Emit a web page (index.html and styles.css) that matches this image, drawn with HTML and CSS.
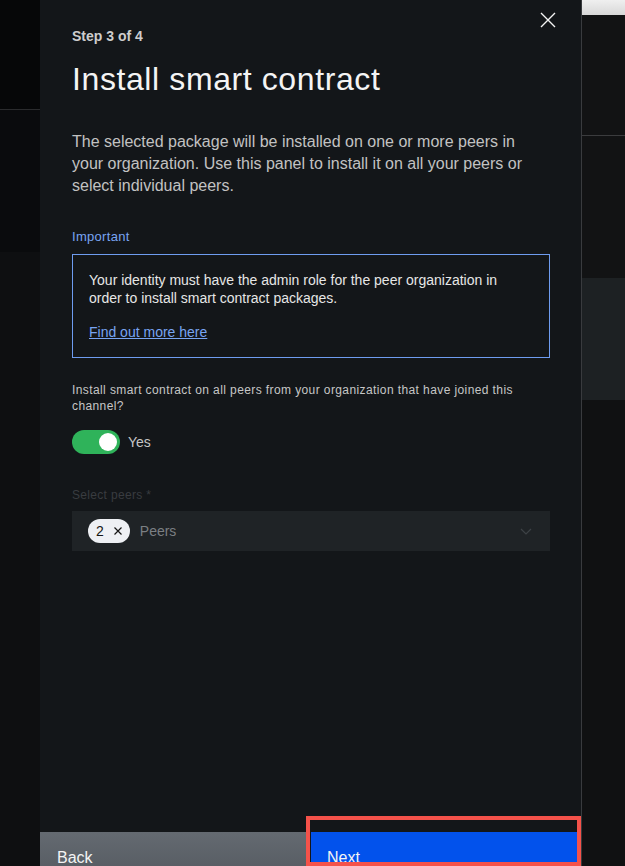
FILE: index.html
```html
<!DOCTYPE html>
<html lang="en">
<head>
<meta charset="utf-8">
<title>Install smart contract</title>
<link rel="stylesheet" href="styles.css">
</head>
<body>
<div class="app">
  <div class="bg-left">
    <div class="bl-top"></div>
    <div class="bl-mid"></div>
    <div class="bl-rest"></div>
  </div>

  <aside class="panel">
    <button class="close" aria-label="Close">
      <svg width="20" height="20" viewBox="0 0 20 20"><path d="M3 3 L17 17 M17 3 L3 17" stroke="#f4f4f4" stroke-width="1.4" fill="none"/></svg>
    </button>
    <div class="content">
      <div class="step">Step 3 of 4</div>
      <h1 class="title">Install smart contract</h1>
      <p class="desc">The selected package will be installed on one or more peers in your organization. Use this panel to install it on all your peers or select individual peers.</p>

      <div class="important-label">Important</div>
      <div class="notice">
        <p class="notice-text">Your identity must have the admin role for the peer organization in order to install smart contract packages.</p>
        <a class="notice-link" href="#">Find out more here</a>
      </div>

      <p class="question">Install smart contract on all peers from your organization that have joined this channel?</p>
      <div class="toggle-row">
        <span class="toggle"><span class="knob"></span></span>
        <span class="toggle-label">Yes</span>
      </div>

      <div class="field-label">Select peers *</div>
      <div class="select">
        <span class="tag">
          <span class="tag-num">2</span>
          <svg class="tag-x" width="16" height="16" viewBox="0 0 16 16"><path d="M4.5 4.5 L11.5 11.5 M11.5 4.5 L4.5 11.5" stroke="#161616" stroke-width="1.2" fill="none"/></svg>
        </span>
        <span class="placeholder">Peers</span>
        <svg class="chev" width="16" height="16" viewBox="0 0 16 16"><path d="M3 6 L8 11 L13 6" stroke="#3d4246" stroke-width="1.2" fill="none"/></svg>
      </div>
    </div>

    <div class="footer">
      <button class="btn btn-back">Back</button>
      <button class="btn btn-next">Next</button>
    </div>
  </aside>

  <div class="bg-right">
    <div class="br-bar"></div>
    <div class="br-a"></div>
    <div class="br-b"></div>
    <div class="br-c"></div>
    <div class="br-d"></div>
  </div>

  <div class="highlight"></div>
</div>
</body>
</html>
```

FILE: styles.css
```css
* { box-sizing: border-box; }
html, body {
  margin: 0;
  padding: 0;
  height: 866px;
  overflow: hidden;
  background: #0b0c0e;
}
body {
  font-family: "Liberation Sans", Arial, sans-serif;
  color: #c6c6c6;
}
.app {
  position: relative;
  display: flex;
  height: 866px;
  overflow: hidden;
}

/* dimmed page behind the panel */
.bg-left {
  width: 40px;
  flex: 0 0 40px;
  display: flex;
  flex-direction: column;
}
.bl-top { height: 110px; background: #060708; border-bottom: 1px solid #2a2b2d; }
.bl-mid { height: 142px; background: #0a0b0d; }
.bl-rest { flex: 1; background: #0e0f11; }

.bg-right {
  flex: 1;
  display: flex;
  flex-direction: column;
}
.br-bar { height: 15px; background: linear-gradient(#efefef, #d8d8d8); }
.br-a { height: 121px; background: #121314; border-bottom: 1px solid #3b3c3e; }
.br-b { height: 142px; background: #121314; }
.br-c { height: 122px; background: #1d2123; }
.br-d { flex: 1; background: #101112; }

/* side panel */
.panel {
  position: relative;
  flex: 0 0 542px;
  width: 542px;
  height: 896px;
  background: #131619;
  border-right: 1px solid #393b3e;
  display: flex;
  flex-direction: column;
}
.close {
  position: absolute;
  top: 0;
  right: 9px;
  width: 48px;
  height: 40px;
  padding: 0;
  border: 0;
  background: transparent;
  display: flex;
  align-items: center;
  justify-content: center;
}
.content {
  flex: 1;
  padding: 27px 31px 0 32px;
  display: flex;
  flex-direction: column;
}
.step {
  font-size: 14px;
  line-height: 18px;
  font-weight: 700;
  color: #cdcdcd;
}
.title {
  margin: 14px 0 0;
  font-size: 32px;
  line-height: 40px;
  font-weight: 400;
  letter-spacing: 0.6px;
  color: #f4f4f4;
}
.desc {
  margin: 32px 0 0;
  font-size: 16px;
  line-height: 22px;
  color: #c2c2c2;
}
.important-label {
  margin-top: 32px;
  font-size: 13px;
  line-height: 16px;
  letter-spacing: 0.3px;
  color: #78a4f2;
}
.notice {
  margin-top: 9px;
  border: 1px solid #6e9cf0;
  padding: 16px;
  display: flex;
  flex-direction: column;
  gap: 16px;
}
.notice-text {
  margin: 0;
  font-size: 14px;
  line-height: 18px;
  color: #e6e6e6;
}
.notice-link {
  font-size: 14px;
  line-height: 18px;
  color: #78a4f2;
  text-decoration: underline;
  align-self: flex-start;
}
.question {
  margin: 24px 0 0;
  font-size: 12px;
  line-height: 16px;
  letter-spacing: 0.4px;
  color: #c6c6c6;
}
.toggle-row {
  margin-top: 16px;
  display: flex;
  align-items: center;
  gap: 8px;
}
.toggle {
  position: relative;
  width: 48px;
  height: 24px;
  border-radius: 12px;
  background: #2fb35a;
  display: flex;
  align-items: center;
  justify-content: flex-end;
  padding-right: 3px;
}
.knob {
  width: 18px;
  height: 18px;
  border-radius: 50%;
  background: #ffffff;
}
.toggle-label {
  font-size: 14px;
  line-height: 18px;
  color: #c6c6c6;
}
.field-label {
  margin-top: 33px;
  font-size: 12px;
  line-height: 16px;
  letter-spacing: 0.32px;
  color: #393c40;
}
.select {
  margin-top: 8px;
  height: 40px;
  background: #1f2326;
  display: flex;
  align-items: center;
  padding: 0 16px;
}
.tag {
  height: 24px;
  border-radius: 12px;
  background: #eef0f4;
  display: inline-flex;
  align-items: center;
  gap: 6px;
  padding: 0 4px 0 8px;
}
.tag-num {
  font-size: 14px;
  line-height: 18px;
  color: #161616;
}
.tag-x { display: block; }
.placeholder {
  margin-left: 10px;
  font-size: 14px;
  line-height: 18px;
  color: #7b7f83;
}
.chev { margin-left: auto; display: block; }

.footer {
  height: 64px;
  display: grid;
  grid-template-columns: 1fr 1fr;
  gap: 1px;
}
.btn {
  border: 0;
  margin: 0;
  font-family: "Liberation Sans", Arial, sans-serif;
  font-size: 16px;
  line-height: 20px;
  color: #f4f4f4;
  text-align: left;
  padding: 16px 16px 0 17px;
  display: flex;
  align-items: flex-start;
}
.btn-back { background: linear-gradient(#646a71, #4f545a); }
.btn-next { background: #0252ec; padding-left: 16px; }

/* annotation overlay */
.highlight {
  position: absolute;
  left: 306px;
  top: 816px;
  width: 275px;
  height: 50px;
  border: 4px solid #f5524a;
  pointer-events: none;
}
```
